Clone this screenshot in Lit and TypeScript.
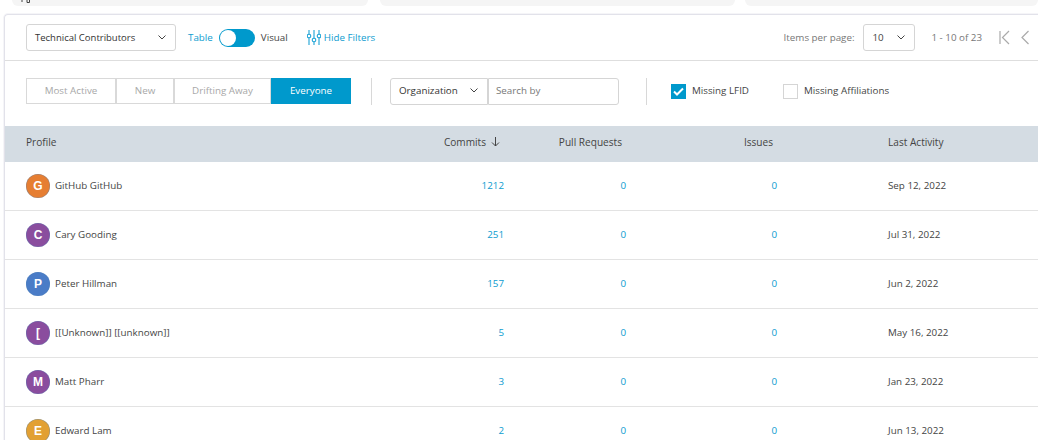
import { LitElement, html, css } from 'lit';
import { customElement } from 'lit/decorators.js';

const rows = [
  { initial: 'G', color: '#e67e32', name: 'GitHub GitHub', commits: 1212, date: 'Sep 12, 2022' },
  { initial: 'C', color: '#8a4d9e', name: 'Cary Gooding', commits: 251, date: 'Jul 31, 2022' },
  { initial: 'P', color: '#4a7cc7', name: 'Peter Hillman', commits: 157, date: 'Jun 2, 2022' },
  { initial: '[', color: '#8a4d9e', name: '[[Unknown]] [[unknown]]', commits: 5, date: 'May 16, 2022' },
  { initial: 'M', color: '#8a4d9e', name: 'Matt Pharr', commits: 3, date: 'Jan 23, 2022' },
  { initial: 'E', color: '#e2a033', name: 'Edward Lam', commits: 2, date: 'Jun 13, 2022' },
];

const chevron = html`<svg class="chev" width="8" height="5" viewBox="0 0 8 5"><path d="M.5.5L4 4 7.5.5" fill="none" stroke="#444" stroke-width="1"/></svg>`;

@customElement('app-root')
export class AppRoot extends LitElement {
  static styles = css`
    :host {
      display: block;
      height: 440px;
      overflow: hidden;
      background: #fff;
      font-family: 'Open Sans', sans-serif;
      font-size: 9.8px;
      color: #444;
    }
    .strip {
      display: flex;
      height: 6px;
      padding-left: 12px;
      margin-bottom: 8px;
    }
    .strip div {
      background: #f5f5f5;
      border-radius: 0 0 12px 12px;
      box-sizing: border-box;
    }
    .strip .one { width: 356px; margin-right: 12px; display: flex; padding-left: 9px; }
    .strip .two { width: 355px; margin-right: 10px; }
    .strip .three { flex: 1; }
    .card {
      margin-left: 4px;
      border: 1px solid #e2e2ea;
      border-right: none;
      border-bottom: none;
      border-radius: 4px 0 0 0;
      box-shadow: 0 0 0 1px #f5f5f8;
    }
    .toolbar {
      display: flex;
      align-items: center;
      padding-left: 21px;
      border-bottom: 1px solid #dedede;
      box-sizing: border-box;
      height: 46px;
    }
    .select {
      display: flex;
      align-items: center;
      justify-content: space-between;
      box-sizing: border-box;
      height: 27px;
      border: 1px solid #d5d5d5;
      border-radius: 3px;
      padding: 0 9px 0 8px;
      color: #333;
    }
    .type { width: 150px; font-size: 9.5px; }
    .blue { color: #0d9ccf; }
    .toggle {
      width: 36px;
      height: 18px;
      border-radius: 9px;
      background: #0099cc;
      margin: 0 6px;
      display: flex;
      align-items: center;
      padding-left: 1px;
      box-sizing: border-box;
    }
    .knob { width: 16px; height: 16px; border-radius: 50%; background: #fff; }
    .table-label { margin-left: 12px; }
    .hide { display: flex; align-items: center; gap: 3px; margin-left: 19px; }
    .pager { margin-left: auto; margin-right: 9px; display: flex; align-items: center; color: #777; }
    .per { width: 52px; margin: 0 16px 0 9px; }
    .per span { color: #444; }
    .pager-icons { display: flex; gap: 11px; margin-left: 17px; }
    .filters {
      display: flex;
      align-items: center;
      height: 65px;
      box-sizing: border-box;
      padding: 0 0 5px 21px;
    }
    .tabs { display: flex; height: 26px; }
    .tab {
      display: flex;
      align-items: center;
      justify-content: center;
      box-sizing: border-box;
      border: 1px solid #d9d9d9;
      padding-bottom: 2px;
      color: #a8a8a8;
    }
    .tab.on { background: #0099cc; border-color: #0099cc; color: #fff; }
    .divider { width: 1px; height: 27px; background: #d8d8d8; }
    .search { display: flex; height: 27px; margin: 0 27px 0 18px; }
    .search > div { padding-bottom: 2px; }
    .org { width: 98px; border-radius: 3px 0 0 3px; }
    .input {
      box-sizing: border-box;
      width: 131px;
      border: 1px solid #d5d5d5;
      border-radius: 0 3px 3px 0;
      padding-left: 7px;
      display: flex;
      align-items: center;
      color: #777;
    }
    .check { display: flex; align-items: center; gap: 6px; color: #444; }
    .check span { padding-bottom: 2px; }
    .box {
      box-sizing: border-box;
      width: 15px;
      height: 15px;
      border: 1px solid #d5d5d5;
      display: flex;
      align-items: center;
      justify-content: center;
    }
    .box.on { background: #0099cc; border-color: #0099cc; }
    .grid {
      display: grid;
      grid-template-columns: 378px 100px 122px 151px 1fr;
      align-items: center;
      padding-left: 21px;
    }
    .head { height: 36px; background: #d4dce3; box-sizing: border-box; padding-bottom: 4px; font-size: 10.1px; }
    .head > div { padding-right: 4px; }
    .row { height: 49px; border-bottom: 1px solid #e3e3e3; box-sizing: border-box; }
    .row .num, .row .last, .name { padding-bottom: 2px; }
    .num { text-align: right; color: #0d9ccf; }
    .head .num { color: #444; display: flex; justify-content: flex-end; align-items: center; gap: 5px; }
    .last { padding-left: 111px; white-space: nowrap; }
    .profile { display: flex; align-items: center; gap: 5px; }
    .avatar {
      width: 24px;
      height: 24px;
      border-radius: 50%;
      display: flex;
      align-items: center;
      justify-content: center;
      color: #fff;
      font-family: 'Liberation Sans', sans-serif;
      font-size: 12px;
      font-weight: 700;
      box-shadow: inset 0 0 0 0.5px rgba(80, 130, 180, 0.6);
    }
  `;

  render() {
    return html`
      <div class="strip">
        <div class="one">
          <svg width="9" height="4" viewBox="0 0 9 4"><path d="M0 1h2M6 0v2.5h2.5V0" fill="none" stroke="#444" stroke-width="1"/></svg>
        </div>
        <div class="two"></div>
        <div class="three"></div>
      </div>
      <div class="card">
        <div class="toolbar">
          <div class="select type"><span>Technical Contributors</span>${chevron}</div>
          <span class="blue table-label">Table</span>
          <div class="toggle"><div class="knob"></div></div>
          <span>Visual</span>
          <div class="hide blue">
            <svg width="14" height="15" viewBox="0 0 14 15" fill="none" stroke="#1da3d6" stroke-width="1.1">
              <path d="M2 0v4M2 8v7M7 0v8M7 12v3M12 0v4M12 8v7"/>
              <circle cx="2" cy="6" r="1.8"/><circle cx="7" cy="10" r="1.8"/><circle cx="12" cy="6" r="1.8"/>
            </svg>
            <span>Hide Filters</span>
          </div>
          <div class="pager">
            <span>Items per page:</span>
            <div class="select per"><span>10</span>${chevron}</div>
            <span>1 - 10 of 23</span>
            <div class="pager-icons">
              <svg width="11" height="15" viewBox="0 0 11 15" fill="none" stroke="#aaa" stroke-width="1.2"><path d="M1 1v13M10 1L3.5 7.5 10 14"/></svg>
              <svg width="8" height="15" viewBox="0 0 8 15" fill="none" stroke="#aaa" stroke-width="1.2"><path d="M7.5 1L1 7.5 7.5 14"/></svg>
            </div>
          </div>
        </div>
        <div class="filters">
          <div class="tabs">
            <div class="tab" style="width:90px">Most Active</div>
            <div class="tab" style="width:58px">New</div>
            <div class="tab" style="width:97px">Drifting Away</div>
            <div class="tab on" style="width:80px">Everyone</div>
          </div>
          <div class="divider" style="margin-left:20px"></div>
          <div class="search">
            <div class="select org"><span>Organization</span>${chevron}</div>
            <div class="input">Search by</div>
          </div>
          <div class="divider" style="margin-right:24px"></div>
          <div class="check">
            <div class="box on">
              <svg width="11" height="9" viewBox="0 0 11 9"><path d="M1 4.5l3 3 6-6" fill="none" stroke="#fff" stroke-width="2"/></svg>
            </div>
            <span>Missing LFID</span>
          </div>
          <div class="check" style="margin-left:34px">
            <div class="box"></div>
            <span>Missing Affiliations</span>
          </div>
        </div>
        <div class="grid head">
          <div>Profile</div>
          <div class="num">Commits
            <svg width="9" height="10" viewBox="0 0 9 10" fill="none" stroke="#444" stroke-width="1"><path d="M4.5 0v9M1 5.5L4.5 9 8 5.5"/></svg>
          </div>
          <div class="num">Pull Requests</div>
          <div class="num">Issues</div>
          <div class="last">Last Activity</div>
        </div>
        ${rows.map(
          (r) => html`
            <div class="grid row">
              <div class="profile">
                <div class="avatar" style="background:${r.color}">${r.initial}</div>
                <span class="name">${r.name}</span>
              </div>
              <div class="num">${r.commits}</div>
              <div class="num">0</div>
              <div class="num">0</div>
              <div class="last">${r.date}</div>
            </div>
          `
        )}
      </div>
    `;
  }
}
